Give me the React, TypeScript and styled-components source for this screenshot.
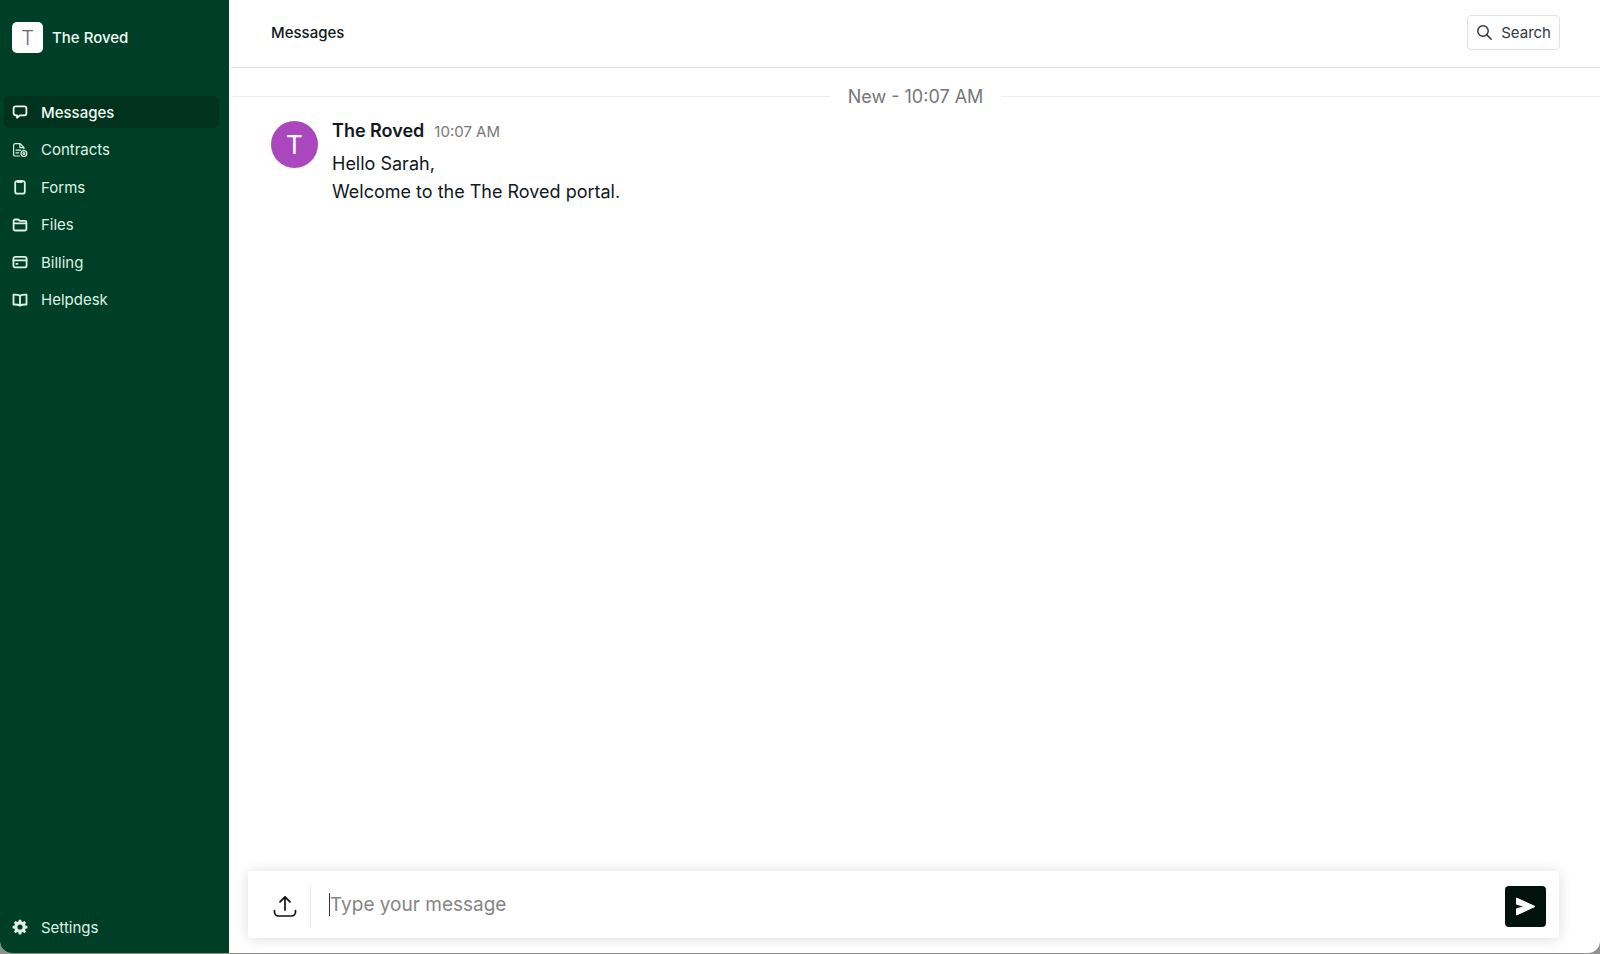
import React from 'react';
import styled, { createGlobalStyle } from 'styled-components';

const GlobalStyle = createGlobalStyle`
  *, *::before, *::after { box-sizing: border-box; }
  body {
    margin: 0;
    background: #8f918f;
    font-family: Inter, "Liberation Sans", sans-serif;
    color: #101820;
  }
  button, input { font: inherit; color: inherit; }
  h1, p, ul { margin: 0; padding: 0; }
  ul { list-style: none; }
`;

const Shell = styled.div`
  display: flex;
  height: calc(100vh - 1px);
  border-radius: 0 0 12px 12px;
  overflow: hidden;
  background: #fff;
`;

const Sidebar = styled.aside`
  display: flex;
  flex-direction: column;
  flex: 0 0 229px;
  padding: 22px 10px 10px 4px;
  background: #003f27;
  color: #e3f3e8;
`;

const Brand = styled.div`
  display: flex;
  align-items: center;
  gap: 9px;
  height: 31px;
  margin: 0 0 43px 8px;
  font-size: 15px;
  font-weight: 500;
  color: #eefaf2;
`;

const BrandMark = styled.span`
  display: grid;
  place-items: center;
  width: 31px;
  height: 31px;
  border-radius: 5px;
  background: #fff;
  color: #666;
  font-size: 20px;
  font-weight: 300;
`;

const NavList = styled.ul`
  display: flex;
  flex-direction: column;
  justify-content: space-between;
  height: 220px;
`;

const NavLink = styled.a<{ $active?: boolean }>`
  display: flex;
  align-items: center;
  gap: 13px;
  height: 32px;
  padding: 0 8px;
  border-radius: 5px;
  background: ${(p) => (p.$active ? '#00321e' : 'transparent')};
  color: ${(p) => (p.$active ? '#f0fbf4' : '#dff2e6')};
  font-size: 15px;
  font-weight: ${(p) => (p.$active ? 500 : 400)};
  text-decoration: none;

  svg { flex: none; }
`;

const SidebarFooter = styled.div`
  margin-top: auto;
`;

const Main = styled.main`
  display: flex;
  flex: 1;
  flex-direction: column;
  min-width: 0;
  padding-left: 2px;
`;

const Header = styled.header`
  display: flex;
  align-items: center;
  justify-content: space-between;
  height: 68px;
  padding: 0 40px 2px;
  border-bottom: 1px solid #dcdddd;
`;

const Title = styled.h1`
  font-size: 15px;
  font-weight: 500;
`;

const SearchButton = styled.button`
  display: flex;
  align-items: center;
  gap: 8px;
  height: 35px;
  padding: 0 8px;
  border: 1px solid #e2e3e4;
  border-radius: 4px;
  background: #fff;
  color: #34383c;
  font-size: 15px;
`;

const Feed = styled.section`
  flex: 1;
  padding-top: 16px;
`;

const DayDivider = styled.div`
  display: flex;
  align-items: center;
  gap: 18px;
  height: 24px;
  color: #757678;
  font-size: 18px;

  &::before, &::after {
    content: "";
    flex: 1;
    height: 1px;
    background: #eeeeef;
  }
`;

const Message = styled.article`
  display: flex;
  gap: 14px;
  padding: 9px 40px;
`;

const Avatar = styled.div`
  display: grid;
  place-items: center;
  flex: none;
  width: 47px;
  height: 47px;
  margin-top: 4px;
  border-radius: 50%;
  background: #ab47bc;
  color: #fff;
  font-size: 26px;
`;

const MessageMeta = styled.div`
  display: flex;
  align-items: baseline;
  gap: 10px;
  height: 33px;
  line-height: 28px;
`;

const Sender = styled.span`
  font-size: 18px;
  font-weight: 600;
`;

const Time = styled.time`
  color: #77787b;
  font-size: 15px;
`;

const MessageText = styled.p`
  font-size: 18px;
  line-height: 28px;
`;

const Composer = styled.form`
  display: flex;
  align-items: center;
  height: 67px;
  margin: 0 41px 15px 17px;
  padding: 3px 13px 0 24px;
  border-radius: 3px;
  background: #fff;
  box-shadow: 0 1px 14px rgba(0, 0, 0, 0.14);
`;

const UploadButton = styled.button`
  display: flex;
  padding: 0;
  border: 0;
  background: none;
  color: #111;
`;

const Field = styled.label`
  display: flex;
  align-items: center;
  flex: 1;
  min-width: 0;
  height: 43px;
  margin-left: 12px;
  padding: 0 0 3px 18px;
  border-left: 1px solid #ececec;
`;

const Caret = styled.span`
  width: 1px;
  height: 23px;
  background: #333;
`;

const MessageInput = styled.input`
  flex: 1;
  min-width: 0;
  padding: 0;
  border: 0;
  outline: 0;
  background: none;
  font-size: 19px;

  &::placeholder { color: #858585; opacity: 1; }
`;

const SendButton = styled.button`
  display: grid;
  place-items: center;
  width: 41px;
  height: 41px;
  padding: 0;
  border: 0;
  border-radius: 4px;
  background: #00120b;
  color: #fff;
`;

const NavIcon = ({ children }: { children: React.ReactNode }) => (
  <svg width="16" height="16" viewBox="0 0 16 16" fill="none" stroke="currentColor" strokeWidth="1.8" strokeLinejoin="round" strokeLinecap="round" aria-hidden="true">
    {children}
  </svg>
);

const navItems = [
  {
    label: 'Messages',
    icon: <path d="M3.6 2.3h8.8a2 2 0 0 1 2 2v5a2 2 0 0 1-2 2H8L5 13.7v-2.400H3.600a2 2 0 0 1-2-2v-5a2 2 0 0 1 2-2z" />,
  },
  {
    label: 'Contracts',
    icon: (
      <g strokeWidth="1.2">
        <path d="M7.400 14H3.200a1.600 1.600 0 0 1-1.600-1.600V3.300a1.600 1.600 0 0 1 1.600-1.600h4.900l3.800 3.800v1.300M7.900 1.900v3.800h3.800M4 8.200h4.600M4 10.900h2.600" />
        <circle cx="11.900" cy="11.600" r="2.900" />
        <circle cx="11.900" cy="11.600" r=".9" />
      </g>
    ),
  },
  {
    label: 'Forms',
    icon: (
      <>
        <rect x="3.200" y="2.200" width="9.600" height="12.400" rx="1.900" />
        <path d="M5.900 1.500h4.200v2H5.900z" fill="currentColor" strokeWidth="1" />
      </>
    ),
  },
  {
    label: 'Files',
    icon: (
      <>
        <path d="M1.600 12V3.900a1.400 1.400 0 0 1 1.400-1.400h3.200l1.600 1.300H13a1.400 1.400 0 0 1 1.400 1.400V12a1.500 1.500 0 0 1-1.500 1.500H3.100A1.500 1.500 0 0 1 1.600 12z" />
        <path d="M1.800 6.300h12.400" />
      </>
    ),
  },
  {
    label: 'Billing',
    icon: (
      <>
        <rect x="1.400" y="2.800" width="13.200" height="10.600" rx="2" />
        <path d="M1.600 6.300h12.800M4.300 9.800h1.200" />
      </>
    ),
  },
  {
    label: 'Helpdesk',
    icon: <path d="M8 3.800C6.400 2.600 4 2.500 1.500 2.600v9.900c2.500-.1 4.900 0 6.500 1.200 1.600-1.200 4-1.300 6.500-1.200V2.600C12 2.500 9.600 2.600 8 3.800zM8 3.800v9.600" />,
  },
];

export default function App() {
  return (
    <>
      <GlobalStyle />
      <Shell>
        <Sidebar>
          <Brand>
            <BrandMark>T</BrandMark>
            The Roved
          </Brand>
          <nav aria-label="Portal">
            <NavList>
              {navItems.map((item, i) => (
                <li key={item.label}>
                  <NavLink href="#" $active={i === 0} aria-current={i === 0 ? 'page' : undefined}>
                    <NavIcon>{item.icon}</NavIcon>
                    {item.label}
                  </NavLink>
                </li>
              ))}
            </NavList>
          </nav>
          <SidebarFooter>
            <NavLink href="#">
              <svg width="16" height="16" viewBox="0 0 16 16" aria-hidden="true">
                <g fill="currentColor" fillRule="evenodd">
                  <path d="M6.800.700h2.400l.4 1.900 1.200.5 1.600-1.100 1.700 1.700L13 5.300l.5 1.200 1.900.4v2.400l-1.900.4-.5 1.200 1.100 1.600-1.700 1.700-1.600-1.100-1.200.5-.4 1.900H6.800l-.4-1.900-1.200-.5-1.600 1.100-1.700-1.700L3 10.900l-.5-1.200-1.900-.4V6.900l1.900-.4L3 5.300 1.900 3.700 3.600 2l1.600 1.100 1.200-.5zM8 5.400a2.600 2.600 0 1 0 0 5.200 2.600 2.600 0 0 0 0-5.200z" />
                </g>
              </svg>
              Settings
            </NavLink>
          </SidebarFooter>
        </Sidebar>
        <Main>
          <Header>
            <Title>Messages</Title>
            <SearchButton type="button">
              <svg width="17" height="17" viewBox="0 0 17 17" fill="none" stroke="currentColor" strokeWidth="1.5" strokeLinecap="round" aria-hidden="true">
                <circle cx="7" cy="7" r="5.2" />
                <path d="M10.900 10.900l4.300 4.300" />
              </svg>
              Search
            </SearchButton>
          </Header>
          <Feed>
            <DayDivider>New - 10:07 AM</DayDivider>
            <Message>
              <Avatar>T</Avatar>
              <div>
                <MessageMeta>
                  <Sender>The Roved</Sender>
                  <Time>10:07 AM</Time>
                </MessageMeta>
                <MessageText>Hello Sarah,</MessageText>
                <MessageText>Welcome to the The Roved portal.</MessageText>
              </div>
            </Message>
          </Feed>
          <Composer onSubmit={(e) => e.preventDefault()}>
            <UploadButton type="button" aria-label="Upload a file">
              <svg width="26" height="26" viewBox="0 0 26 26" fill="none" stroke="currentColor" strokeWidth="1.7" strokeLinecap="round" strokeLinejoin="round" aria-hidden="true">
                <path d="M2.500 17.500v1.500a4 4 0 0 0 4 4h13a4 4 0 0 0 4-4v-1.500M13 17V4M8 8.800L13 3.800l5 5" />
              </svg>
            </UploadButton>
            <Field>
              <Caret />
              <MessageInput type="text" aria-label="Message" placeholder="Type your message" />
            </Field>
            <SendButton type="submit" aria-label="Send message">
              <svg width="21" height="19" viewBox="0 0 21 19" fill="currentColor" aria-hidden="true">
                <path d="M1.500 1L20 9.500 1.500 18v-6.200l8-2.300-8-2.300z" stroke="currentColor" strokeWidth="1" strokeLinejoin="round" />
              </svg>
            </SendButton>
          </Composer>
        </Main>
      </Shell>
    </>
  );
}
